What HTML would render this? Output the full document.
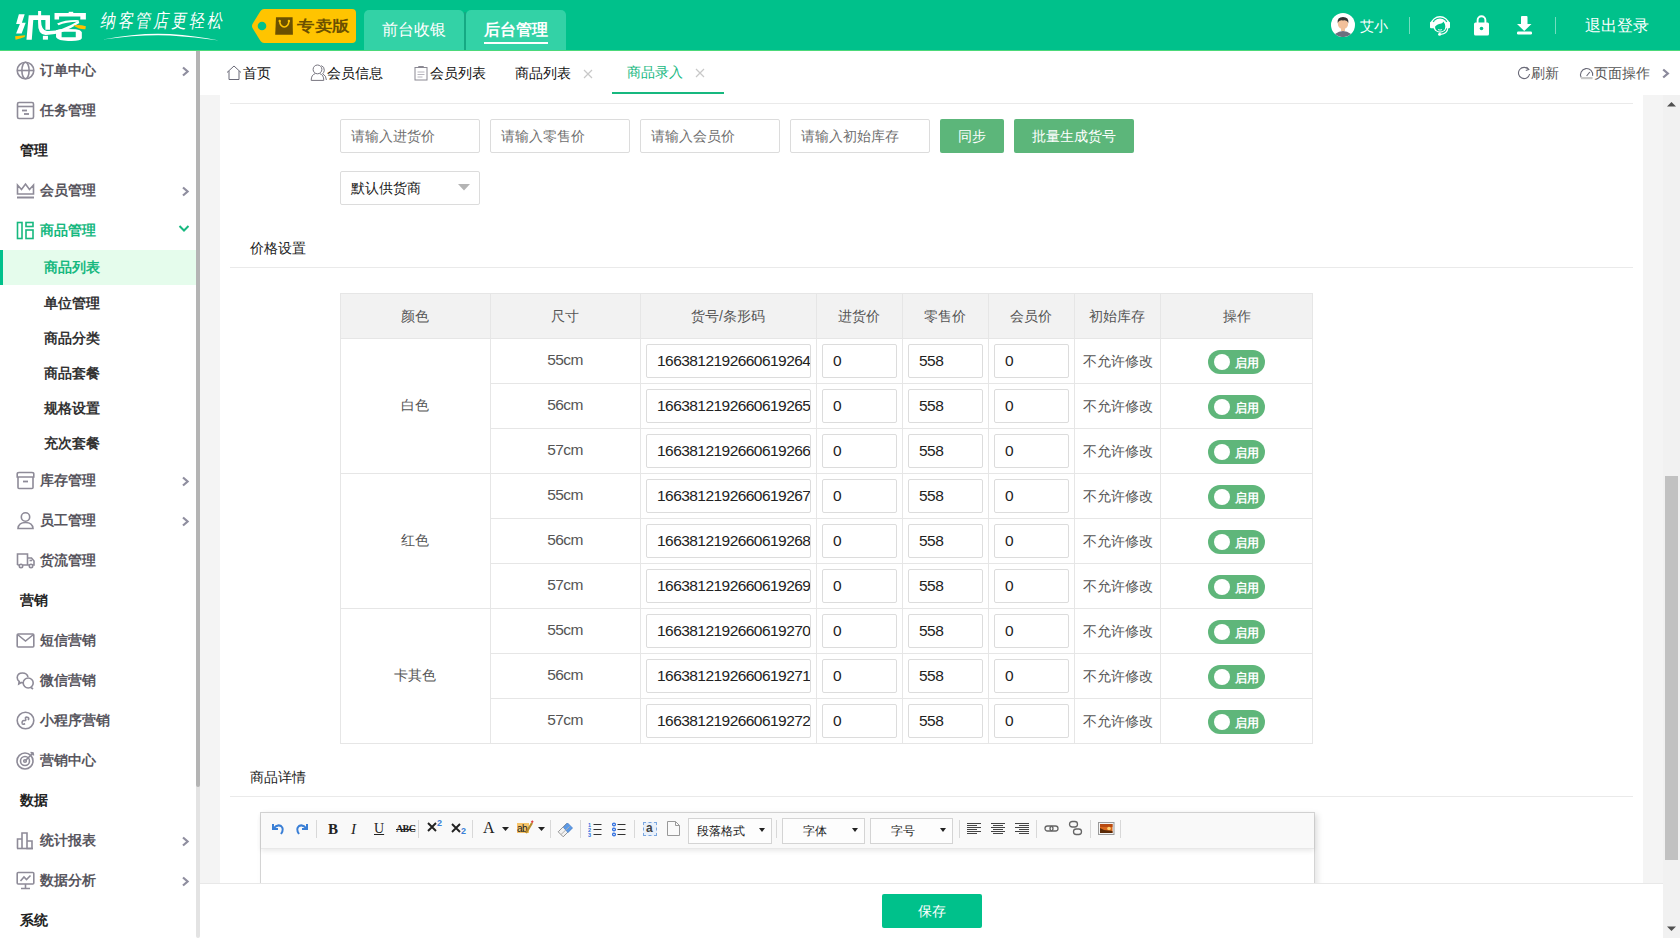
<!DOCTYPE html>
<html><head><meta charset="utf-8">
<style>
*{box-sizing:border-box;margin:0;padding:0}
html,body{width:1680px;height:938px;overflow:hidden;background:#fff;font-family:"Liberation Sans",sans-serif;font-size:14px;color:#333}
.a{position:absolute}
#hd{position:absolute;left:0;top:0;width:1680px;height:51px;background:#00c18b;border-bottom:1px solid #4cd97a}
#sb{position:absolute;left:0;top:51px;width:196px;height:887px;background:#fff}
#sbs{position:absolute;left:196px;top:51px;width:4px;height:887px;background:#e3e3e3;border-radius:0 0 2px 2px}
#sbt{position:absolute;left:196px;top:51px;width:4px;height:736px;background:#b4b4b4;border-radius:0 0 2px 2px}
#tb{position:absolute;left:200px;top:51px;width:1480px;height:44px;background:#fff}
#ct{position:absolute;left:200px;top:95px;width:1463px;height:788px;background:#f4f4f4}
#pn{position:absolute;left:220px;top:95px;width:1423px;height:788px;background:#fff}
#vs{position:absolute;left:1663px;top:95px;width:17px;height:843px;background:#f1f1f1}
#ft{position:absolute;left:200px;top:883px;width:1463px;height:55px;background:#fff;border-top:1px solid #e8e8e8}
.mi{left:40px;font-size:14px;font-weight:bold;line-height:20px;white-space:nowrap}
.ms{left:20px;font-size:14px;font-weight:bold;line-height:20px;color:#222}
.su{left:44px;font-size:14px;font-weight:bold;line-height:20px;color:#333}
.tt{top:63px;font-size:14px;line-height:20px;color:#111;white-space:nowrap}
.inp{border:1px solid #dcdcdc;border-radius:2px;background:#fff;font-size:14px;line-height:32px;padding-left:10px;white-space:nowrap;overflow:hidden}
.btn{height:34px;background:#5cb67a;border-radius:2px;color:#fff;font-size:14px;line-height:34px;text-align:center}
.th{font-size:14px;line-height:20px;text-align:center;color:#555;white-space:nowrap}
.num{font-size:15.5px;letter-spacing:-0.55px}
.ti{height:34px;border:1px solid #dcdcdc;border-radius:2px;background:#fff;line-height:32px;padding-left:10px;white-space:nowrap;overflow:hidden;color:#222}
.tg{left:1208px;width:57px;height:24px;border-radius:12px;background:#5fb67a}
.tg i{position:absolute;left:6px;top:4px;width:16px;height:16px;border-radius:50%;background:#fff}
.tg span{position:absolute;left:27px;top:6px;font-size:12px;line-height:14px;color:#fff;font-weight:bold}
.ed{top:820px;line-height:18px;color:#222}
.sel{top:818px;height:26px;border:1px solid #d4d4d4;background:#fdfdfd}
.sel span{position:absolute;top:4px;font-size:12px;line-height:16px;color:#222}
.sel b{position:absolute;right:6px;top:9px;border-left:3.5px solid transparent;border-right:3.5px solid transparent;border-top:4px solid #222}
.hl{position:absolute;height:1px;background:#eaeaea}
</style></head><body>

<div id="hd">
 <svg class="a" style="left:10px;top:6px" width="85" height="40" viewBox="0 0 1680 791">
  <path d="M175 165 H290 L235 330 H310 L230 545 H120 L195 355 H120Z" fill="#fff"/>
  <path d="M100 600 Q200 590 300 580 L290 615 Q200 650 110 665Z" fill="#ffc000"/>
  <path d="M370 185 H790 V470 H700 V275 H460 L430 665 H325Z" fill="#fff"/>
  <path d="M555 100 H615 V300 Q615 470 730 495 Q1000 510 1355 290 L1370 335 Q1000 580 700 575 Q545 555 555 330Z" fill="#fff"/>
  <rect x="650" y="590" width="100" height="75" fill="#fff"/>
  <rect x="1160" y="115" width="90" height="45" fill="#fff"/>
  <path d="M880 140 H1500 V265 H1390 V210 H970 V265 H880Z" fill="#fff"/>
  <path d="M930 345 Q1100 270 1360 280 L1350 310 Q1100 310 960 380Z" fill="#fff"/>
  <path d="M910 480 Q1010 440 1300 460 Q1400 470 1420 520 V640 Q1400 700 1150 690 Q950 690 910 620Z M1020 510 V620 H1300 V510Z" fill="#fff" fill-rule="evenodd"/>
  <path d="M1260 380 Q1380 360 1500 400 L1490 460 Q1380 470 1260 390Z" fill="#ffc000"/>
 </svg>
 <div class="a" style="left:101px;top:9px;font-size:15px;color:#fff;letter-spacing:2.8px;line-height:24px;font-weight:300;transform:skewX(-10deg) scaleY(1.25)">纳客管店更轻松</div>
 <svg class="a" style="left:100px;top:32px" width="124" height="10"><path d="M3 7.6 Q40 0.2 70 2 Q95 3.5 119 8.5 Q95 4.8 70 3.5 Q40 2.2 3 7.6Z" fill="#fff"/></svg>
 <svg class="a" style="left:251px;top:9px" width="106" height="34">
  <path d="M13 0 H101 Q105 0 105 4 V30 Q105 34 101 34 H13 Q11 34 9.5 32 L1.5 19 Q0.5 17 1.5 15 L9.5 2 Q11 0 13 0Z" fill="#ffc400"/>
  <circle cx="11" cy="17" r="4.3" fill="#00c18b"/>
  <path d="M25 8.2 H41.6 L41.9 25.7 H24.2Z" fill="#6b5000"/>
  <path d="M28.7 12 A4.6 6 0 0 0 37.9 12" stroke="#ffc400" stroke-width="1.5" fill="none"/>
  <circle cx="28.7" cy="12" r="1.2" fill="#ffc400"/><circle cx="37.9" cy="12" r="1.2" fill="#ffc400"/>
 </svg>
 <div class="a" style="left:297px;top:16px;font-size:17px;font-weight:900;color:#6b5000;line-height:22px;letter-spacing:0.5px;transform:scaleY(0.86);transform-origin:0 50%">专卖版</div>
 <div class="a" style="left:364px;top:10px;width:100px;height:40px;background:#33d2a6;border-radius:5px 5px 0 0"></div>
 <div class="a" style="left:466px;top:10px;width:100px;height:40px;background:#33d2a6;border-radius:5px 5px 0 0"></div>
 <div class="a" style="left:464px;top:12px;width:2px;height:38px;background:#15a983"></div>
 <div class="a" style="left:382px;top:19px;font-size:16px;color:#fff;line-height:22px">前台收银</div>
 <div class="a" style="left:484px;top:19px;font-size:16px;font-weight:bold;color:#fff;line-height:22px">后台管理</div>
 <div class="a" style="left:484px;top:42px;width:64px;height:2px;background:#fff"></div>
 <svg class="a" style="left:1331px;top:13px" width="24" height="24">
  <circle cx="12" cy="12" r="12" fill="#fff"/>
  <path d="M4 21 Q12 15 20 21 A12 12 0 0 1 4 21Z" fill="#6d6f7e"/>
  <rect x="10" y="14" width="4" height="4" fill="#f2c09a"/>
  <ellipse cx="12" cy="10.5" rx="5.2" ry="5.5" fill="#f2c09a"/>
  <path d="M6.6 10 Q6 4 12 4 Q18 4 17.4 10 Q16 6.5 12 7.5 Q8 6.5 6.6 10Z" fill="#333"/>
 </svg>
 <div class="a" style="left:1360px;top:16px;font-size:14px;color:#fff;line-height:20px">艾小</div>
 <div class="a" style="left:1409px;top:17px;width:1px;height:17px;background:rgba(255,255,255,.45)"></div>
 <svg class="a" style="left:1428px;top:12px" width="24" height="26">
  <path d="M3 12 A9.3 9.6 0 0 1 21 12" stroke="#fff" stroke-width="1.4" fill="none"/>
  <circle cx="12" cy="13.6" r="7.1" fill="#fff"/>
  <path d="M7 14.8 Q8.5 12 13.3 11.4 Q14.8 11 15.4 9.4 Q17.3 11.8 17.3 14.3 Q17.3 19.5 12 19.5 Q7.2 19.5 7 14.8Z" fill="#00c18b"/>
  <path d="M10 17.6 Q12 18.6 14 17.6" stroke="#fff" stroke-width="0.9" fill="none"/>
  <rect x="2" y="9.8" width="4" height="6.4" rx="1" fill="#fff"/>
  <rect x="18" y="9.8" width="4" height="6.4" rx="1" fill="#fff"/>
  <path d="M19.8 16 Q19.5 21.6 12.5 22.3" stroke="#fff" stroke-width="1.2" fill="none"/>
  <circle cx="11.6" cy="22.2" r="1.5" fill="#fff"/>
 </svg>
 <svg class="a" style="left:1473px;top:15px" width="17" height="21">
  <path d="M4.6 8 V5.2 A3.9 3.9 0 0 1 12.4 5.2 V8" stroke="#fff" stroke-width="1.9" fill="none"/>
  <rect x="1" y="7.5" width="15" height="13" rx="1.5" fill="#fff"/>
  <circle cx="8.5" cy="13.5" r="1.8" fill="#00c18b"/>
 </svg>
 <svg class="a" style="left:1516px;top:15px" width="17" height="20">
  <rect x="5" y="1" width="6.5" height="9" rx="1" fill="#fff"/>
  <path d="M1 9 H15.5 L8.25 16Z" fill="#fff"/>
  <rect x="1" y="16.5" width="15" height="3" rx="1.2" fill="#fff"/>
 </svg>
 <div class="a" style="left:1555px;top:17px;width:1px;height:17px;background:rgba(255,255,255,.45)"></div>
 <div class="a" style="left:1585px;top:15px;font-size:16px;color:#fff;line-height:22px">退出登录</div>
</div>
<div id="sb"></div>
<div id="sbwrap"><svg class="a" style="left:16px;top:61px" width="19" height="19" fill="none" stroke="#8e8b98" stroke-width="1.6"><circle cx="9.5" cy="9.5" r="8.3"/><ellipse cx="9.5" cy="9.5" rx="3.6" ry="8.3"/><path d="M1.2 9.5 H17.8"/></svg>
<div class="a mi" style="top:60px;color:#58565e">订单中心</div>
<svg class="a" style="left:181px;top:66px" width="10" height="11"><path d="M2 1.5 L6.6 5.5 L2 9.5" stroke="#8f8e9f" stroke-width="2.2" fill="none"/></svg>
<svg class="a" style="left:16px;top:101px" width="19" height="19" fill="none" stroke="#8e8b98" stroke-width="1.6"><rect x="1.5" y="1.5" width="16" height="16" rx="1.5"/><path d="M1.5 5.5 H17.5"/><path d="M6 9.5 H11" stroke-width="1.8"/><path d="M8 13 H13" stroke-width="1.8"/></svg>
<div class="a mi" style="top:100px;color:#58565e">任务管理</div>
<div class="a ms" style="top:140px">管理</div>
<svg class="a" style="left:16px;top:181px" width="19" height="19" fill="none" stroke="#8e8b98" stroke-width="1.6"><path d="M1.5 13 V4 L5.5 8.5 L9.5 3 L13.5 8.5 L17.5 4 V13 Z"/><path d="M1 16.5 H18" stroke-width="2"/></svg>
<div class="a mi" style="top:180px;color:#58565e">会员管理</div>
<svg class="a" style="left:181px;top:186px" width="10" height="11"><path d="M2 1.5 L6.6 5.5 L2 9.5" stroke="#8f8e9f" stroke-width="2.2" fill="none"/></svg>
<svg class="a" style="left:16px;top:221px" width="19" height="19" fill="none" stroke="#17b87f" stroke-width="1.6"><rect x="1.5" y="1.5" width="4.5" height="16"/><rect x="10" y="1.5" width="7" height="4"/><rect x="10" y="9" width="7" height="8.5"/></svg>
<div class="a mi" style="top:220px;color:#17b87f">商品管理</div>
<svg class="a" style="left:178px;top:224px" width="12" height="9"><path d="M1.5 2 L6 6.5 L10.5 2" stroke="#17b87f" stroke-width="2" fill="none"/></svg>
<div class="a" style="left:0;top:250px;width:196px;height:35px;background:#e5fcec"></div><div class="a" style="left:0;top:250px;width:3px;height:35px;background:#00c18b"></div>
<div class="a su" style="top:257px;color:#17b87f">商品列表</div>
<div class="a su" style="top:293px">单位管理</div>
<div class="a su" style="top:328px">商品分类</div>
<div class="a su" style="top:363px">商品套餐</div>
<div class="a su" style="top:398px">规格设置</div>
<div class="a su" style="top:433px">充次套餐</div>
<svg class="a" style="left:16px;top:471px" width="19" height="19" fill="none" stroke="#8e8b98" stroke-width="1.6"><path d="M2 6 V16.5 Q2 17.5 3 17.5 H16 Q17 17.5 17 16.5 V6"/><path d="M1.2 6 V3 Q1.2 1.5 3 1.5 H16 Q17.8 1.5 17.8 3 V6 Z"/><path d="M7 10.5 H12" stroke-width="1.8"/></svg>
<div class="a mi" style="top:470px;color:#58565e">库存管理</div>
<svg class="a" style="left:181px;top:476px" width="10" height="11"><path d="M2 1.5 L6.6 5.5 L2 9.5" stroke="#8f8e9f" stroke-width="2.2" fill="none"/></svg>
<svg class="a" style="left:16px;top:511px" width="19" height="19" fill="none" stroke="#8e8b98" stroke-width="1.6"><circle cx="9.5" cy="6" r="4.2"/><path d="M2 17.5 Q2.5 11.5 9.5 11.5 Q16.5 11.5 17 17.5 Z"/></svg>
<div class="a mi" style="top:510px;color:#58565e">员工管理</div>
<svg class="a" style="left:181px;top:516px" width="10" height="11"><path d="M2 1.5 L6.6 5.5 L2 9.5" stroke="#8f8e9f" stroke-width="2.2" fill="none"/></svg>
<svg class="a" style="left:16px;top:551px" width="19" height="19" fill="none" stroke="#8e8b98" stroke-width="1.6"><path d="M1.5 14 V3 H11.5 V14"/><path d="M11.5 7 H15.5 L18 10 V14 H16"/><path d="M1.5 14 H3.5 M7 14 H14"/><circle cx="5" cy="15" r="1.7"/><circle cx="15" cy="15" r="1.7"/><path d="M13.5 9.5 H16"/></svg>
<div class="a mi" style="top:550px;color:#58565e">货流管理</div>
<div class="a ms" style="top:590px">营销</div>
<svg class="a" style="left:16px;top:631px" width="19" height="19" fill="none" stroke="#8e8b98" stroke-width="1.6"><rect x="1.2" y="3" width="16.6" height="13" rx="1"/><path d="M1.5 3.5 L9.5 10 L17.5 3.5"/></svg>
<div class="a mi" style="top:630px;color:#58565e">短信营销</div>
<svg class="a" style="left:16px;top:671px" width="19" height="19" fill="none" stroke="#8e8b98" stroke-width="1.6"><path d="M12 6 Q11 2 6.5 2 Q1.5 2 1.2 6.5 Q1.2 9 3.2 10.5 L2.8 13 L5.2 11.5 Q6 11.8 7.2 11.8"/><circle cx="12.2" cy="12" r="5"/><path d="M15 16.5 L17 18"/></svg>
<div class="a mi" style="top:670px;color:#58565e">微信营销</div>
<svg class="a" style="left:16px;top:711px" width="19" height="19" fill="none" stroke="#8e8b98" stroke-width="1.6"><circle cx="9.5" cy="9.5" r="8.3"/><path d="M6 12.5 Q6 9 8.5 9.5 Q10.5 10 9.5 7.5 Q9 5.5 12 6.5 Q13.5 7.5 12 9"/><path d="M6 12.5 Q7 14 9 12.5"/></svg>
<div class="a mi" style="top:710px;color:#58565e">小程序营销</div>
<svg class="a" style="left:16px;top:751px" width="19" height="19" fill="none" stroke="#8e8b98" stroke-width="1.6"><circle cx="9" cy="10" r="8"/><circle cx="9" cy="10" r="4.5"/><circle cx="9" cy="10" r="1.3"/><path d="M9.5 9.5 L17 2 M14.5 1.5 L17 2 L17.5 4.5"/></svg>
<div class="a mi" style="top:750px;color:#58565e">营销中心</div>
<div class="a ms" style="top:790px">数据</div>
<svg class="a" style="left:16px;top:831px" width="19" height="19" fill="none" stroke="#8e8b98" stroke-width="1.6"><path d="M1.5 17.5 V8 H6 V17.5 M6 17.5 V2 H11 V17.5 M11 17.5 V10 H16 V17.5 Z"/><path d="M1 17.5 H17"/></svg>
<div class="a mi" style="top:830px;color:#58565e">统计报表</div>
<svg class="a" style="left:181px;top:836px" width="10" height="11"><path d="M2 1.5 L6.6 5.5 L2 9.5" stroke="#8f8e9f" stroke-width="2.2" fill="none"/></svg>
<svg class="a" style="left:16px;top:871px" width="19" height="19" fill="none" stroke="#8e8b98" stroke-width="1.6"><rect x="1.2" y="1.5" width="16.6" height="11.5" rx="1"/><path d="M4.5 10 L8 6 L10.5 8.5 L14.5 4.5"/><path d="M9.5 13 V17 M5 17.5 H14"/></svg>
<div class="a mi" style="top:870px;color:#58565e">数据分析</div>
<svg class="a" style="left:181px;top:876px" width="10" height="11"><path d="M2 1.5 L6.6 5.5 L2 9.5" stroke="#8f8e9f" stroke-width="2.2" fill="none"/></svg>
<div class="a ms" style="top:910px">系统</div></div>
<div id="sbs"></div><div id="sbt"></div>
<div id="tb"></div>
<div id="tabs">
 <svg class="a" style="left:226px;top:65px" width="16" height="15" fill="none" stroke="#6a6a78" stroke-width="1"><path d="M1 7.5 L8 1 L15 7.5"/><path d="M3 6 V14.5 H13 V6"/></svg>
 <div class="a tt" style="left:243px">首页</div>
 <svg class="a" style="left:310px;top:64px" width="18" height="18" fill="none" stroke="#77757f" stroke-width="1"><circle cx="7.5" cy="5.4" r="4.4"/><path d="M1.2 16.4 Q1.2 10.8 5.3 9.6 M9.7 9.6 Q13.8 10.8 13.8 16.4 H1.2"/><path d="M11.2 1.6 Q14.6 2.8 14.3 6.4 Q14 8.6 12.6 9.8 Q16.4 11.6 16.4 16"/></svg>
 <div class="a tt" style="left:327px">会员信息</div>
 <svg class="a" style="left:414px;top:65px" width="14" height="16" fill="none" stroke="#8a8892" stroke-width="1"><rect x="1" y="2.5" width="12" height="12.5"/><path d="M4.5 2.5 V1.5 H9.5 V2.5" /><path d="M3.5 7 H10.5 M3.5 9.5 H10.5 M3.5 12 H8.5" stroke="#b8b6be"/></svg>
 <div class="a tt" style="left:430px">会员列表</div>
 <div class="a tt" style="left:515px">商品列表</div>
 <svg class="a" style="left:583px;top:69px" width="10" height="10" stroke="#c8c8c8" stroke-width="1.2"><path d="M1 1 L9 9 M9 1 L1 9"/></svg>
 <div class="a tt" style="left:627px;top:62px;color:#17b87f">商品录入</div>
 <svg class="a" style="left:695px;top:68px" width="10" height="10" stroke="#c8c8c8" stroke-width="1.2"><path d="M1 1 L9 9 M9 1 L1 9"/></svg>
 <div class="a" style="left:612px;top:92px;width:112px;height:2px;background:#17b87f"></div>
 <svg class="a" style="left:1517px;top:66px" width="14" height="14" fill="none" stroke="#6a6a78" stroke-width="1.1"><path d="M11.5 3.5 A5.6 5.6 0 1 0 12.6 8"/><path d="M9.5 1 L11.8 3.6 L8.8 4.6" /></svg>
 <div class="a tt" style="left:1531px;color:#555">刷新</div>
 <svg class="a" style="left:1579px;top:66px" width="16" height="14" fill="none" stroke="#6a6a78" stroke-width="1.1"><path d="M2.2 11.5 A6.1 6.1 0 1 1 13.6 9.8"/><path d="M7.6 10 L10.8 6"/><rect x="2" y="11" width="11.5" height="2.2" fill="#c8c8c8" stroke="none"/></svg>
 <div class="a tt" style="left:1594px;color:#555">页面操作</div>
 <svg class="a" style="left:1661px;top:68px" width="10" height="11"><path d="M2.2 1.5 L6.8 5.5 L2.2 9.5" stroke="#8b8a9c" stroke-width="2.3" fill="none"/></svg>
</div>
<div id="ct"></div>
<div id="pn"></div>
<div class="hl" style="left:230px;top:103px;width:1403px"></div>
<div class="a inp" style="left:340px;top:119px;width:140px;height:34px"><span style="color:#707070">请输入进货价</span></div>
<div class="a inp" style="left:490px;top:119px;width:140px;height:34px"><span style="color:#707070">请输入零售价</span></div>
<div class="a inp" style="left:640px;top:119px;width:140px;height:34px"><span style="color:#707070">请输入会员价</span></div>
<div class="a inp" style="left:790px;top:119px;width:140px;height:34px"><span style="color:#707070">请输入初始库存</span></div>
<div class="a btn" style="left:940px;top:119px;width:64px">同步</div>
<div class="a btn" style="left:1014px;top:119px;width:120px">批量生成货号</div>
<div class="a inp" style="left:340px;top:171px;width:140px;height:34px;color:#222">默认供货商</div>
<svg class="a" style="left:458px;top:184px" width="13" height="7"><path d="M0 0 H12 L6 6.5Z" fill="#b4b4b4"/></svg>
<div class="a" style="left:250px;top:238px;font-size:14px;line-height:20px;color:#222">价格设置</div>
<div class="hl" style="left:230px;top:267px;width:1403px"></div>
<div class="a" style="left:340px;top:293px;width:973px;height:46px;background:#f2f2f2"></div>
<div class="a" style="left:340px;top:293px;width:973px;height:1px;background:#e6e6e6"></div>
<div class="a" style="left:340px;top:338px;width:973px;height:1px;background:#e6e6e6"></div>
<div class="a" style="left:490px;top:383px;width:823px;height:1px;background:#e6e6e6"></div>
<div class="a" style="left:490px;top:428px;width:823px;height:1px;background:#e6e6e6"></div>
<div class="a" style="left:340px;top:473px;width:973px;height:1px;background:#e6e6e6"></div>
<div class="a" style="left:490px;top:518px;width:823px;height:1px;background:#e6e6e6"></div>
<div class="a" style="left:490px;top:563px;width:823px;height:1px;background:#e6e6e6"></div>
<div class="a" style="left:340px;top:608px;width:973px;height:1px;background:#e6e6e6"></div>
<div class="a" style="left:490px;top:653px;width:823px;height:1px;background:#e6e6e6"></div>
<div class="a" style="left:490px;top:698px;width:823px;height:1px;background:#e6e6e6"></div>
<div class="a" style="left:340px;top:743px;width:973px;height:1px;background:#e6e6e6"></div>
<div class="a" style="left:340px;top:293px;width:1px;height:451px;background:#e6e6e6"></div>
<div class="a" style="left:490px;top:293px;width:1px;height:451px;background:#e6e6e6"></div>
<div class="a" style="left:640px;top:293px;width:1px;height:451px;background:#e6e6e6"></div>
<div class="a" style="left:816px;top:293px;width:1px;height:451px;background:#e6e6e6"></div>
<div class="a" style="left:902px;top:293px;width:1px;height:451px;background:#e6e6e6"></div>
<div class="a" style="left:988px;top:293px;width:1px;height:451px;background:#e6e6e6"></div>
<div class="a" style="left:1074px;top:293px;width:1px;height:451px;background:#e6e6e6"></div>
<div class="a" style="left:1160px;top:293px;width:1px;height:451px;background:#e6e6e6"></div>
<div class="a" style="left:1312px;top:293px;width:1px;height:451px;background:#e6e6e6"></div>
<div class="a th" style="left:340px;width:150px;top:306px">颜色</div>
<div class="a th" style="left:490px;width:150px;top:306px">尺寸</div>
<div class="a th" style="left:640px;width:176px;top:306px">货号/条形码</div>
<div class="a th" style="left:816px;width:86px;top:306px">进货价</div>
<div class="a th" style="left:902px;width:86px;top:306px">零售价</div>
<div class="a th" style="left:988px;width:86px;top:306px">会员价</div>
<div class="a th" style="left:1074px;width:86px;top:306px">初始库存</div>
<div class="a th" style="left:1160px;width:153px;top:306px">操作</div>
<div class="a th" style="left:340px;width:150px;top:395px;color:#555">白色</div>
<div class="a th" style="left:340px;width:150px;top:530px;color:#555">红色</div>
<div class="a th" style="left:340px;width:150px;top:665px;color:#555">卡其色</div>
<div class="a th num" style="left:490px;width:150px;top:350px;color:#555">55cm</div>
<div class="a ti" style="left:646px;top:344px;width:165px"><span class="num">1663812192660619264</span></div>
<div class="a ti" style="left:822px;top:344px;width:75px"><span class="num">0</span></div>
<div class="a ti" style="left:908px;top:344px;width:75px"><span class="num">558</span></div>
<div class="a ti" style="left:994px;top:344px;width:75px"><span class="num">0</span></div>
<div class="a" style="left:1083px;top:351px;font-size:14px;line-height:20px;color:#555">不允许修改</div>
<div class="a tg" style="top:350px"><i></i><span>启用</span></div>
<div class="a th num" style="left:490px;width:150px;top:395px;color:#555">56cm</div>
<div class="a ti" style="left:646px;top:389px;width:165px"><span class="num">1663812192660619265</span></div>
<div class="a ti" style="left:822px;top:389px;width:75px"><span class="num">0</span></div>
<div class="a ti" style="left:908px;top:389px;width:75px"><span class="num">558</span></div>
<div class="a ti" style="left:994px;top:389px;width:75px"><span class="num">0</span></div>
<div class="a" style="left:1083px;top:396px;font-size:14px;line-height:20px;color:#555">不允许修改</div>
<div class="a tg" style="top:395px"><i></i><span>启用</span></div>
<div class="a th num" style="left:490px;width:150px;top:440px;color:#555">57cm</div>
<div class="a ti" style="left:646px;top:434px;width:165px"><span class="num">1663812192660619266</span></div>
<div class="a ti" style="left:822px;top:434px;width:75px"><span class="num">0</span></div>
<div class="a ti" style="left:908px;top:434px;width:75px"><span class="num">558</span></div>
<div class="a ti" style="left:994px;top:434px;width:75px"><span class="num">0</span></div>
<div class="a" style="left:1083px;top:441px;font-size:14px;line-height:20px;color:#555">不允许修改</div>
<div class="a tg" style="top:440px"><i></i><span>启用</span></div>
<div class="a th num" style="left:490px;width:150px;top:485px;color:#555">55cm</div>
<div class="a ti" style="left:646px;top:479px;width:165px"><span class="num">1663812192660619267</span></div>
<div class="a ti" style="left:822px;top:479px;width:75px"><span class="num">0</span></div>
<div class="a ti" style="left:908px;top:479px;width:75px"><span class="num">558</span></div>
<div class="a ti" style="left:994px;top:479px;width:75px"><span class="num">0</span></div>
<div class="a" style="left:1083px;top:486px;font-size:14px;line-height:20px;color:#555">不允许修改</div>
<div class="a tg" style="top:485px"><i></i><span>启用</span></div>
<div class="a th num" style="left:490px;width:150px;top:530px;color:#555">56cm</div>
<div class="a ti" style="left:646px;top:524px;width:165px"><span class="num">1663812192660619268</span></div>
<div class="a ti" style="left:822px;top:524px;width:75px"><span class="num">0</span></div>
<div class="a ti" style="left:908px;top:524px;width:75px"><span class="num">558</span></div>
<div class="a ti" style="left:994px;top:524px;width:75px"><span class="num">0</span></div>
<div class="a" style="left:1083px;top:531px;font-size:14px;line-height:20px;color:#555">不允许修改</div>
<div class="a tg" style="top:530px"><i></i><span>启用</span></div>
<div class="a th num" style="left:490px;width:150px;top:575px;color:#555">57cm</div>
<div class="a ti" style="left:646px;top:569px;width:165px"><span class="num">1663812192660619269</span></div>
<div class="a ti" style="left:822px;top:569px;width:75px"><span class="num">0</span></div>
<div class="a ti" style="left:908px;top:569px;width:75px"><span class="num">558</span></div>
<div class="a ti" style="left:994px;top:569px;width:75px"><span class="num">0</span></div>
<div class="a" style="left:1083px;top:576px;font-size:14px;line-height:20px;color:#555">不允许修改</div>
<div class="a tg" style="top:575px"><i></i><span>启用</span></div>
<div class="a th num" style="left:490px;width:150px;top:620px;color:#555">55cm</div>
<div class="a ti" style="left:646px;top:614px;width:165px"><span class="num">1663812192660619270</span></div>
<div class="a ti" style="left:822px;top:614px;width:75px"><span class="num">0</span></div>
<div class="a ti" style="left:908px;top:614px;width:75px"><span class="num">558</span></div>
<div class="a ti" style="left:994px;top:614px;width:75px"><span class="num">0</span></div>
<div class="a" style="left:1083px;top:621px;font-size:14px;line-height:20px;color:#555">不允许修改</div>
<div class="a tg" style="top:620px"><i></i><span>启用</span></div>
<div class="a th num" style="left:490px;width:150px;top:665px;color:#555">56cm</div>
<div class="a ti" style="left:646px;top:659px;width:165px"><span class="num">1663812192660619271</span></div>
<div class="a ti" style="left:822px;top:659px;width:75px"><span class="num">0</span></div>
<div class="a ti" style="left:908px;top:659px;width:75px"><span class="num">558</span></div>
<div class="a ti" style="left:994px;top:659px;width:75px"><span class="num">0</span></div>
<div class="a" style="left:1083px;top:666px;font-size:14px;line-height:20px;color:#555">不允许修改</div>
<div class="a tg" style="top:665px"><i></i><span>启用</span></div>
<div class="a th num" style="left:490px;width:150px;top:710px;color:#555">57cm</div>
<div class="a ti" style="left:646px;top:704px;width:165px"><span class="num">1663812192660619272</span></div>
<div class="a ti" style="left:822px;top:704px;width:75px"><span class="num">0</span></div>
<div class="a ti" style="left:908px;top:704px;width:75px"><span class="num">558</span></div>
<div class="a ti" style="left:994px;top:704px;width:75px"><span class="num">0</span></div>
<div class="a" style="left:1083px;top:711px;font-size:14px;line-height:20px;color:#555">不允许修改</div>
<div class="a tg" style="top:710px"><i></i><span>启用</span></div>
<div class="a" style="left:250px;top:767px;font-size:14px;line-height:20px;color:#222">商品详情</div>
<div class="hl" style="left:230px;top:796px;width:1403px"></div>
<div class="a" style="left:260px;top:812px;width:1055px;height:80px;border:1px solid #d4d4d4;background:#fff;box-shadow:3px 2px 6px rgba(0,0,0,.10)"></div>
<div class="a" style="left:261px;top:813px;width:1053px;height:36px;background:#f9f9f9;border-bottom:1px solid #e8e8e8;box-shadow:0 2px 5px rgba(0,0,0,.09)"></div>
<svg class="a" style="left:270px;top:821px" width="16" height="16" fill="none" stroke="#3a7fd6" stroke-width="2"><path d="M3 3 V8 H8"/><path d="M3.5 7.5 Q7 3 11 5 Q14.5 8 11 13"/></svg>
<svg class="a" style="left:294px;top:821px" width="16" height="16" fill="none" stroke="#3a7fd6" stroke-width="2"><path d="M13 3 V8 H8"/><path d="M12.5 7.5 Q9 3 5 5 Q1.5 8 5 13"/></svg>
<div class="a" style="left:316px;top:820px;width:1px;height:18px;background:#d8d8d8"></div>
<div class="a ed" style="left:328px;font-weight:bold;font-family:'Liberation Serif',serif;font-size:15px">B</div>
<div class="a ed" style="left:351px;font-style:italic;font-family:'Liberation Serif',serif;font-size:15px">I</div>
<div class="a ed" style="left:374px;text-decoration:underline;font-family:'Liberation Serif',serif;font-size:14px">U</div>
<div class="a ed" style="left:396px;text-decoration:line-through;font-family:'Liberation Serif',serif;font-size:10px;font-weight:bold;letter-spacing:-0.6px;top:820px">ABC</div>
<div class="a" style="left:418px;top:820px;width:1px;height:18px;background:#d8d8d8"></div>
<svg class="a" style="left:427px;top:822px" width="10" height="10"><path d="M1 1 L9 9 M9 1 L1 9" stroke="#222" stroke-width="1.9"/></svg><div class="a" style="left:437px;top:819px;font-size:9px;line-height:9px;font-weight:bold;color:#3a7fd6">2</div>
<svg class="a" style="left:451px;top:823px" width="10" height="10"><path d="M1 1 L9 9 M9 1 L1 9" stroke="#222" stroke-width="1.9"/></svg><div class="a" style="left:461px;top:827px;font-size:9px;line-height:9px;font-weight:bold;color:#3a7fd6">2</div>
<div class="a" style="left:472px;top:820px;width:1px;height:18px;background:#d8d8d8"></div>
<div class="a ed" style="left:483px;font-family:'Liberation Serif',serif;font-size:16px;top:819px">A</div>
<svg class="a" style="left:502px;top:827px" width="7" height="4"><path d="M0 0 H7 L3.5 4Z" fill="#222"/></svg>
<div class="a" style="left:517px;top:823px;width:12px;height:10px;background:#f6c46a"></div><div class="a ed" style="left:517px;font-size:10px;top:820px;letter-spacing:-0.5px">ab</div>
<svg class="a" style="left:524px;top:820px" width="10" height="15"><path d="M2 13 L8 3" stroke="#b38a2a" stroke-width="2.2"/><path d="M7.5 2.5 L9 1" stroke="#e04040" stroke-width="2"/></svg>
<svg class="a" style="left:538px;top:827px" width="7" height="4"><path d="M0 0 H7 L3.5 4Z" fill="#222"/></svg>
<div class="a" style="left:550px;top:820px;width:1px;height:18px;background:#d8d8d8"></div>
<svg class="a" style="left:557px;top:821px" width="17" height="16"><path d="M1.2 10.8 L9.5 2.5 L14.5 7.5 L6.2 15.8Z" fill="#f2f2f2" stroke="#8a8a8a" stroke-width="0.9"/><path d="M6.5 6.5 L10.5 2 L15.5 7 L11 11.5Z" fill="#5a9ae8" stroke="#4a80c8" stroke-width="0.8"/><path d="M4 13.5 L12.5 5.5" stroke="#b0b0b0" stroke-width="1"/></svg>
<div class="a" style="left:580px;top:820px;width:1px;height:18px;background:#d8d8d8"></div>
<svg class="a" style="left:588px;top:822px" width="15" height="15"><text x="0" y="5" font-size="5.5" fill="#2f6fe0" font-family="Liberation Sans" font-weight="bold">1</text><text x="0" y="10" font-size="5.5" fill="#2f6fe0" font-family="Liberation Sans" font-weight="bold">2</text><text x="0" y="15" font-size="5.5" fill="#2f6fe0" font-family="Liberation Sans" font-weight="bold">3</text><path d="M5.5 2.5 H13.5 M5.5 7.5 H13.5 M5.5 12.5 H13.5" stroke="#333" stroke-width="1.1"/></svg>
<svg class="a" style="left:612px;top:822px" width="15" height="15"><circle cx="2" cy="2.5" r="1.4" fill="#fff" stroke="#2f6fe0" stroke-width="1.3"/><circle cx="2" cy="7.5" r="1.4" fill="#fff" stroke="#2f6fe0" stroke-width="1.3"/><circle cx="2" cy="12.5" r="1.4" fill="#fff" stroke="#2f6fe0" stroke-width="1.3"/><path d="M5.5 2.5 H13.5 M5.5 7.5 H13.5 M5.5 12.5 H13.5" stroke="#333" stroke-width="1.1"/></svg>
<div class="a" style="left:634px;top:820px;width:1px;height:18px;background:#d8d8d8"></div>
<div class="a" style="left:643px;top:822px;width:14px;height:14px;border:1px dashed #7aa7e0;background:#e8f0fb"></div><div class="a ed" style="left:646px;top:819px;font-size:12px;font-weight:bold;color:#444">a</div>
<svg class="a" style="left:667px;top:821px" width="13" height="15"><path d="M0.5 0.5 H8.5 L12.5 4.5 V14.5 H0.5Z" fill="#fafafa" stroke="#999" stroke-width="1"/><path d="M8.5 0.5 V4.5 H12.5" fill="none" stroke="#999" stroke-width="1"/></svg>
<div class="a sel" style="left:688px;width:84px"><span style="left:8px">段落格式</span><b></b></div>
<div class="a" style="left:776px;top:820px;width:1px;height:18px;background:#d8d8d8"></div>
<div class="a sel" style="left:782px;width:83px"><span style="left:20px">字体</span><b></b></div>
<div class="a sel" style="left:870px;width:83px"><span style="left:20px">字号</span><b></b></div>
<div class="a" style="left:959px;top:820px;width:1px;height:18px;background:#d8d8d8"></div>
<svg class="a" style="left:967px;top:822px" width="15" height="15"><path d="M0 1.5 H14 M0 3.5 H10 M0 5.5 H14 M0 7.5 H10 M0 9.5 H14 M0 11.5 H10" stroke="#444" stroke-width="1"/></svg>
<svg class="a" style="left:991px;top:822px" width="15" height="15"><path d="M0 1.5 H14 M2 3.5 H12 M0 5.5 H14 M2 7.5 H12 M0 9.5 H14 M2 11.5 H12" stroke="#444" stroke-width="1"/></svg>
<svg class="a" style="left:1015px;top:822px" width="15" height="15"><path d="M0 1.5 H14 M4 3.5 H14 M0 5.5 H14 M4 7.5 H14 M0 9.5 H14 M4 11.5 H14" stroke="#444" stroke-width="1"/></svg>
<div class="a" style="left:1036px;top:820px;width:1px;height:18px;background:#d8d8d8"></div>
<svg class="a" style="left:1044px;top:823px" width="16" height="12" fill="none" stroke="#666" stroke-width="1.3"><rect x="1" y="3" width="8" height="5" rx="2.5"/><rect x="6" y="3" width="8" height="5" rx="2.5"/></svg>
<svg class="a" style="left:1068px;top:820px" width="16" height="17" fill="none" stroke="#666" stroke-width="1.3"><rect x="1.5" y="1.5" width="8" height="5.5" rx="2.7"/><rect x="5.5" y="9" width="8" height="5.5" rx="2.7"/></svg>
<div class="a" style="left:1090px;top:820px;width:1px;height:18px;background:#d8d8d8"></div>
<svg class="a" style="left:1098px;top:822px" width="17" height="13"><rect x="0.5" y="0.5" width="15.5" height="12" fill="#f4f4f4" stroke="#9a9a9a" stroke-width="1"/><rect x="2" y="2" width="12.5" height="9" fill="#d9681c"/><rect x="2" y="2" width="12.5" height="3" fill="#b84a10"/><circle cx="11" cy="6.5" r="1.8" fill="#ffd070"/><path d="M2 6 L6 8 L14.5 9 V11 H2Z" fill="#5a2a08"/></svg>
<div class="a" style="left:1120px;top:820px;width:1px;height:18px;background:#d8d8d8"></div>
<div id="ft"></div>
<div class="a" style="left:882px;top:894px;width:100px;height:34px;background:#00c18b;border-radius:2px;color:#fff;font-size:14px;line-height:34px;text-align:center">保存</div>
<div id="vs"></div>
<div class="a" style="left:1665px;top:476px;width:13px;height:384px;background:#c1c1c1"></div>
<svg class="a" style="left:1667px;top:101px" width="10" height="6"><path d="M0 5.5 H9 L4.5 1Z" fill="#505050"/></svg>
<svg class="a" style="left:1667px;top:926px" width="10" height="6"><path d="M0 0.5 H9 L4.5 5Z" fill="#505050"/></svg>

</body></html>
